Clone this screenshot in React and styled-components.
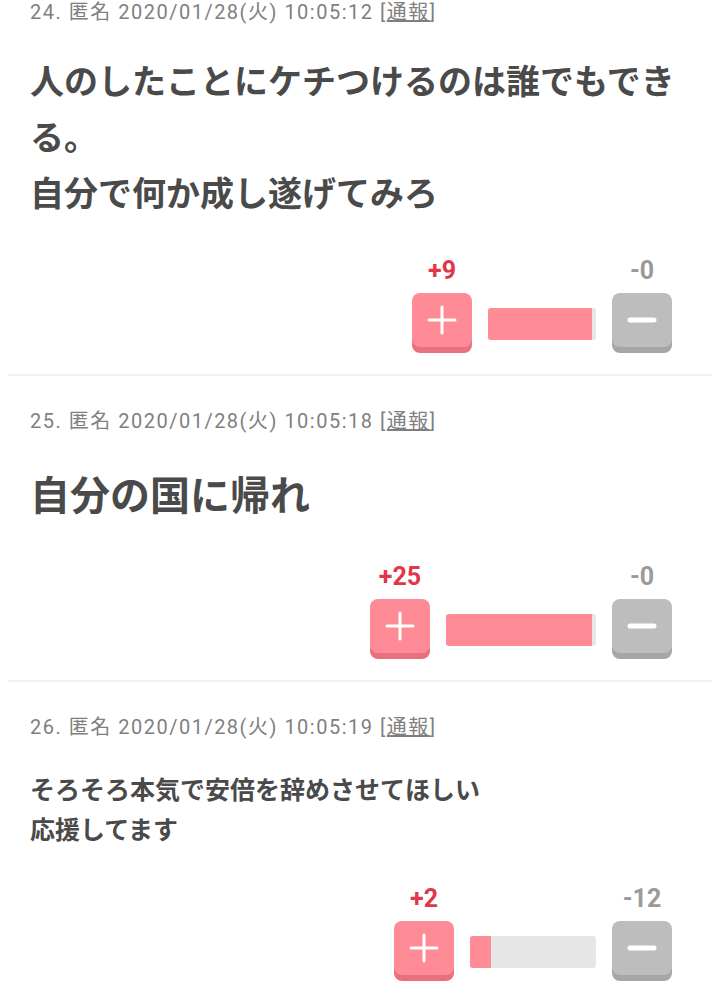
import React from "react"
import styled, { createGlobalStyle } from "styled-components"

const GlobalStyle = createGlobalStyle`
  html, body {
    margin: 0;
    padding: 0;
    background: #fff;
  }
  body {
    font-family: Roboto, "Noto Sans CJK JP", sans-serif;
  }
`

const List = styled.div`
  margin: 0 8px;
`

const Post = styled.div`
  padding: ${(p) => (p.$first ? "0" : "33px")} 10px 21px 22px;
  border-bottom: ${(p) => (p.$last ? "none" : "2px solid #f0f0f0")};
`

const Header = styled.div`
  font-size: 20px;
  line-height: 24px;
  letter-spacing: 1.5px;
  color: #7f7f7f;
  white-space: nowrap;

  & span {
    text-decoration: underline;
  }
`

const Body = styled.div`
  margin-top: ${(p) => p.$mt}px;
  font-family: "Noto Sans CJK JP", sans-serif;
  font-weight: 700;
  font-size: ${(p) => p.$size}px;
  line-height: ${(p) => p.$lh};
  color: #4a4a4a;
`

const Votes = styled.div`
  margin-top: 37px;
  padding-right: 30px;
  display: flex;
  justify-content: flex-end;
  align-items: flex-end;
  gap: 16px;
`

const VoteCol = styled.div`
  display: flex;
  flex-direction: column;
  align-items: center;
  gap: 9px;
`

const Count = styled.div`
  font-family: Roboto, sans-serif;
  font-weight: 700;
  font-size: 25px;
  line-height: 27px;
  color: ${(p) => (p.$plus ? "#e0374a" : "#9a9a9a")};
`

const Btn = styled.div`
  width: 60px;
  height: 54px;
  border-radius: 8px;
  background: ${(p) => (p.$plus ? "#ff8b97" : "#bdbdbd")};
  box-shadow: 0 6px 0 ${(p) => (p.$plus ? "#e9707d" : "#a6a6a6")};
  margin-bottom: 6px;
  display: flex;
  align-items: center;
  justify-content: center;
`

const Bar = styled.div`
  height: 32px;
  margin-bottom: 13px;
  border-radius: 3px;
  background: #e6e6e6;
  overflow: hidden;
  display: flex;
`

const Fill = styled.div`
  background: #ff8b97;
  height: 100%;
`

const PlusIcon = () => (
  <svg width="30" height="30" viewBox="0 0 30 30">
    <path d="M15 2v26M2 15h26" stroke="#fff" strokeWidth="3" strokeLinecap="round" />
  </svg>
)

const MinusIcon = () => (
  <svg width="30" height="30" viewBox="0 0 30 30">
    <path d="M3 15h24" stroke="#fff" strokeWidth="5" strokeLinecap="round" />
  </svg>
)

const posts = [
  {
    no: 24,
    time: "2020/01/28(火) 10:05:12",
    size: 34,
    lh: "56px",
    mt: 28,
    lines: ["人のしたことにケチつけるのは誰でもできる。", "自分で何か成し遂げてみろ"],
    plus: 9,
    minus: 0,
    bar: 108,
    fill: 104,
  },
  {
    no: 25,
    time: "2020/01/28(火) 10:05:18",
    size: 40,
    lh: "66px",
    mt: 27,
    lines: ["自分の国に帰れ"],
    plus: 25,
    minus: 0,
    bar: 150,
    fill: 146,
  },
  {
    no: 26,
    time: "2020/01/28(火) 10:05:19",
    size: 25,
    lh: "40px",
    mt: 29,
    lines: ["そろそろ本気で安倍を辞めさせてほしい", "応援してます"],
    plus: 2,
    minus: 12,
    bar: 126,
    fill: 21,
  },
]

export default function App() {
  return (
    <>
      <GlobalStyle />
      <List>
        {posts.map((p, i) => (
          <Post key={p.no} $first={i === 0} $last={i === posts.length - 1}>
            <Header>
              {p.no}. 匿名 {p.time} [<span>通報</span>]
            </Header>
            <Body $size={p.size} $lh={p.lh} $mt={p.mt}>
              {p.lines.map((l, j) => (
                <div key={j}>{l}</div>
              ))}
            </Body>
            <Votes>
              <VoteCol>
                <Count $plus>+{p.plus}</Count>
                <Btn $plus>
                  <PlusIcon />
                </Btn>
              </VoteCol>
              <Bar style={{ width: p.bar }}>
                <Fill style={{ width: p.fill }} />
              </Bar>
              <VoteCol>
                <Count>-{p.minus}</Count>
                <Btn>
                  <MinusIcon />
                </Btn>
              </VoteCol>
            </Votes>
          </Post>
        ))}
      </List>
    </>
  )
}
